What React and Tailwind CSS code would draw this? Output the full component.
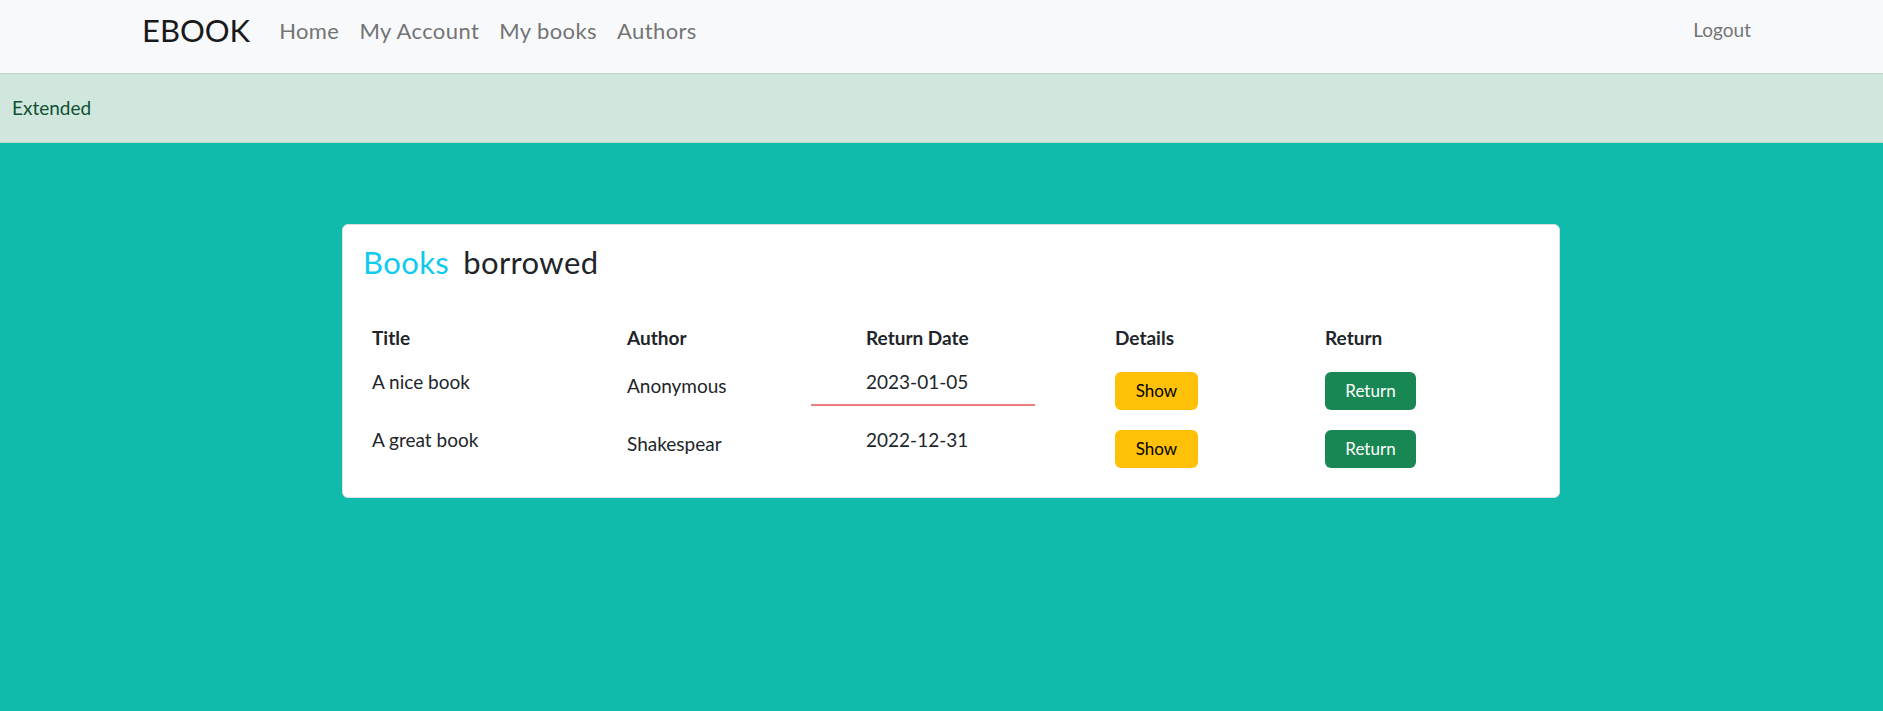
const books = [
  { title: "A nice book", author: "Anonymous", date: "2023-01-05", late: true },
  { title: "A great book", author: "Shakespear", date: "2022-12-31", late: false },
];

const App = () => {
  return (
    <div className="min-h-[711px] flex flex-col bg-[#11bbac] font-['Lato','Noto_Sans',sans-serif] text-[#212529]">
      {/* Navbar */}
      <nav className="h-[73px] bg-[#f8f9fa] shrink-0">
        <div className="h-[61px] flex items-center pl-[142px] pr-[132px]">
          <span className="text-[31px] text-[#1a1a1a] leading-none mr-[29px]">EBOOK</span>
          <div className="flex items-center gap-[20px] text-[22px] tracking-[0.4px] text-[#737475]">
            <a>Home</a>
            <a>My Account</a>
            <a>My books</a>
            <a>Authors</a>
          </div>
          <a className="ml-auto text-[19px] text-[#737475]">Logout</a>
        </div>
      </nav>

      {/* Alert */}
      <div className="h-[70px] shrink-0 flex items-center border-y border-[#badbcc] bg-[#d1e7dd] pl-[12px] text-[19px] text-[#0f5132]">
        Extended
      </div>

      {/* Content */}
      <main className="flex-1 pt-[81px] pl-[342px]">
        <div className="w-[1218px] h-[274px] bg-white border border-[#dcdfe2] rounded-[6px] pt-[19px]">
          <h2 className="pl-[20px] text-[31px] leading-[36px] tracking-[0.4px]">
            <span className="text-[#0dcaf0]">Books</span>
            <span className="ml-[14px]">borrowed</span>
          </h2>

          <div className="pl-[29px] mt-[46px]">
            <div className="grid grid-cols-[255px_239px_249px_210px_1fr] text-[19px] leading-[24px] font-bold">
              <div>Title</div>
              <div>Author</div>
              <div>Return Date</div>
              <div>Details</div>
              <div>Return</div>
            </div>

            <div className="mt-[20px]">
              {books.map((b) => (
                <div
                  key={b.title}
                  className="grid grid-cols-[255px_239px_249px_210px_1fr] h-[58px] items-start text-[19px] leading-[24px]"
                >
                  <div>{b.title}</div>
                  <div className="mt-[4px]">{b.author}</div>
                  <div>
                    <div>{b.date}</div>
                    {b.late && (
                      <div className="-ml-[55px] mt-[10px] w-[224px] h-[2px] bg-[#ee7d7d]" />
                    )}
                  </div>
                  <div className="mt-[2px]">
                    <button className="w-[83px] h-[38px] rounded-[6px] bg-[#ffc107] text-black text-[17px]">
                      Show
                    </button>
                  </div>
                  <div className="mt-[2px]">
                    <button className="w-[91px] h-[38px] rounded-[6px] bg-[#198754] text-white text-[17px]">
                      Return
                    </button>
                  </div>
                </div>
              ))}
            </div>
          </div>
        </div>
      </main>
    </div>
  );
};

export default App;
